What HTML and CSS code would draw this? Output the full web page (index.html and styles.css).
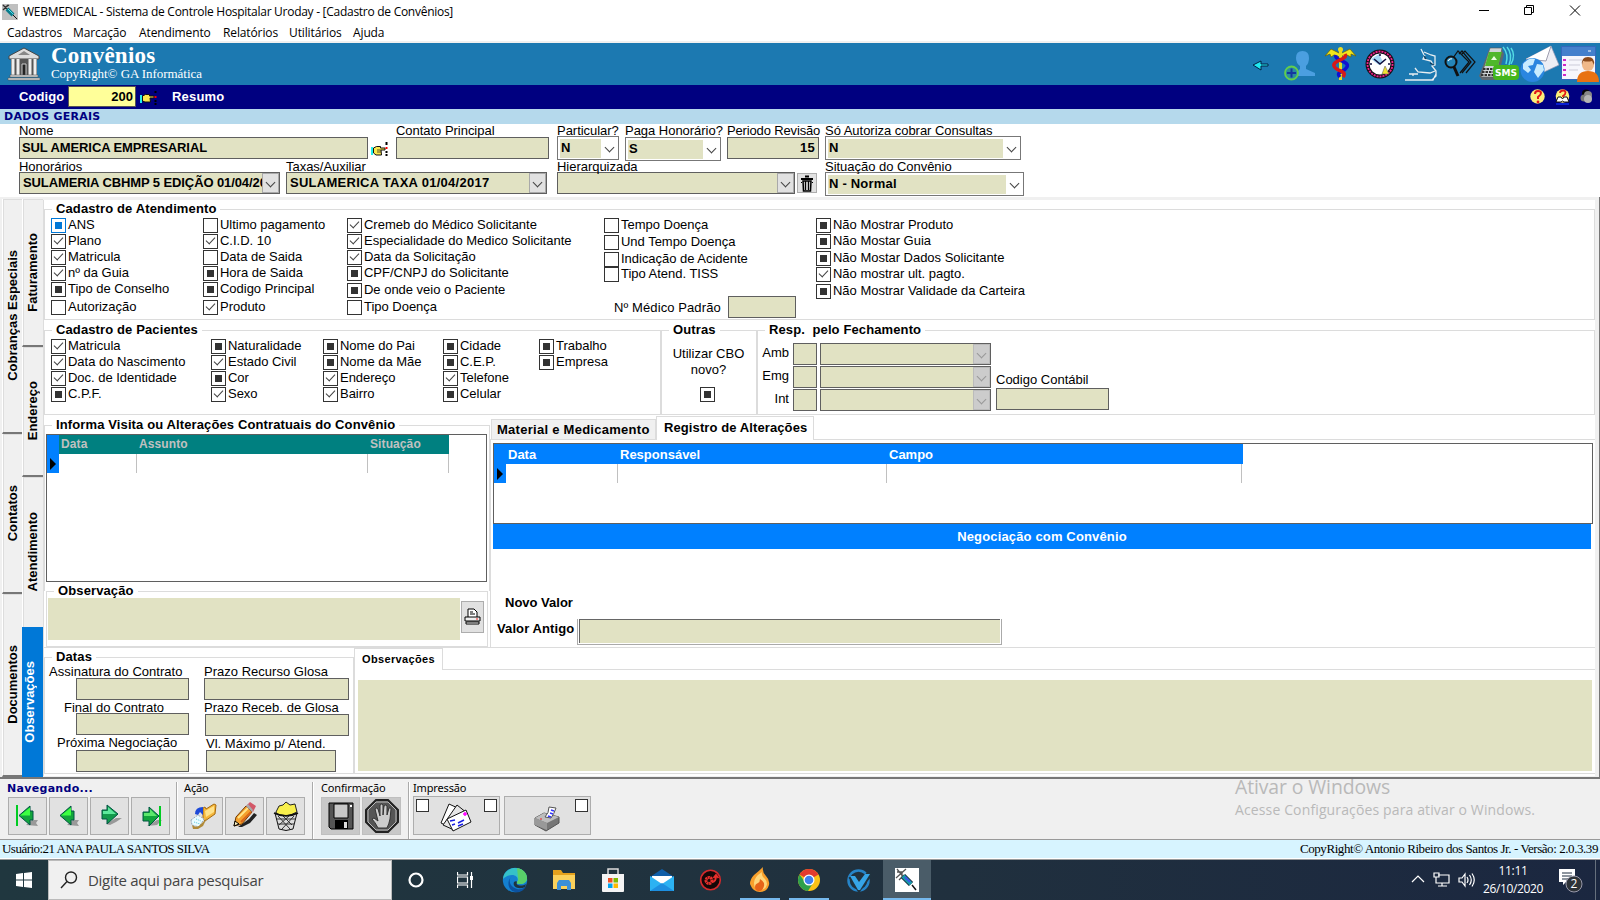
FILE: index.html
```html
<!DOCTYPE html>
<html lang="pt-BR">
<head>
<meta charset="utf-8">
<title>WEBMEDICAL - Cadastro de Convênios</title>
<link rel="stylesheet" href="styles.css">
</head>
<body>
<div class="titlebar">
  <svg class="app-icon" width="16" height="16" viewBox="0 0 16 16"><rect width="16" height="16" fill="#c0c0c0"/><path d="M1 1l5 5M1 6l5-5M4 3l3-2" stroke="#333" stroke-width="1.3"/><path d="M5 5l6 6" stroke="#0a7c8c" stroke-width="4"/><path d="M6 5l5 5" stroke="#4fe0ee" stroke-width="1"/><path d="M11 11l4 4" stroke="#111"/></svg>
  <span class="title-text">WEBMEDICAL - Sistema de Controle Hospitalar Uroday - [Cadastro de Convênios]</span>
  <svg class="winctl" width="116" height="22" viewBox="0 0 116 22" fill="none" stroke="#000"><path d="M7 10.500h10M52.500 7.500h7v7h-7zM54.500 7.500v-2h7v7h-2M98 5.500l10 10M108 5.500l-10 10"/></svg>
</div>
<div class="menubar"><span class="m1">Cadastros</span><span class="m2">Marcação</span><span class="m3">Atendimento</span><span class="m4">Relatórios</span><span class="m5">Utilitários</span><span>Ajuda</span></div>

<header class="banner">
  <svg class="temple" width="34" height="34" viewBox="0 0 34 34"><path d="M17 1L32 9v3H2V9z" fill="#ddd" stroke="#444"/><path d="M11 8l6-4 6 4z" fill="#888"/><rect x="4" y="12" width="26" height="16" fill="#555"/><path d="M6 12v16M11 12v16M23 12v16M28 12v16" stroke="#eee" stroke-width="3"/><path d="M15 28V17h4v11" fill="#222" stroke="#ccc"/><path d="M3 28h28v2H3zM1 31h32v2H1z" fill="#ddd" stroke="#555" stroke-width=".6"/></svg>
  <div class="brand"><div class="brand-name">Convênios</div><div class="brand-copy">CopyRight© GA Informática</div></div>
  <div class="banner-icons">
    <svg class="i1" width="17" height="12" viewBox="0 0 17 12"><path d="M1 6l8-4v3h7v2H9v4z" fill="#20e8f0" stroke="#024"/></svg>
    <svg class="i2" width="32" height="32" viewBox="0 0 32 32"><path d="M12 8q0-7 6.500-7T25 8q0 5-3 8v3l9 4v3H11l2-4 3-3v-3q-4-3-4-8z" fill="#4b9fe0"/><circle cx="7.500" cy="23" r="6.500" fill="#2b8ca0" stroke="#62ce4c" stroke-width="1.800"/><path d="M7.500 18.500v9M3 23h9" stroke="#1436a0" stroke-width="2"/></svg>
    <svg class="i3" width="33" height="34" viewBox="0 0 33 34"><path d="M1 9l6-7 8 4h3l8-4 6 7-5-2v3l-4-2-1 3-5-3-5 3-2-3-3 2-1-3z" fill="#f2e61c" stroke="#6b6000" stroke-width=".7"/><path d="M16.500 1v32" stroke="#e8dc20" stroke-width="3"/><path d="M12 8c-2 6 14 6 11 12s-12 4-7 10" fill="none" stroke="#1010d0" stroke-width="3.500"/><path d="M21 7c3 6-13 6-11 12s14 4 9 11" fill="none" stroke="#d81818" stroke-width="3.500"/><circle cx="16.500" cy="2.500" r="2.500" fill="#e8dc20"/></svg>
    <svg class="i4" width="30" height="30" viewBox="0 0 30 30"><circle cx="15" cy="15" r="12.500" fill="#fff" stroke="#181018" stroke-width="4"/><circle cx="15" cy="15" r="12.500" fill="none" stroke="#f0208a" stroke-width="1.800" stroke-dasharray="2 1"/><path d="M6 10l8-5 4 8-4 3z" fill="#a4d6f4"/><path d="M15 5v2M5 15h2M25 15h-2M9 10l6 5 6-5" fill="none" stroke="#101040" stroke-width="1.600"/><path d="M20 17l4 8h-7z" fill="#f2e230" stroke="#555" stroke-width=".5"/></svg>
    <svg class="i5" width="34" height="34" viewBox="0 0 34 34" fill="none" stroke="#e8eef2" stroke-width="1.300"><path d="M17 1l3 6M20 4l7 3 4 1v9l-3 1 4 5v5l-4 4M21 7l-2 4 8 2 3 5M11 20l3 4 12 1 5-2M5 26h9M9 26v2M1 32h28l3-6"/><path d="M20 8l2 3M26 15l4 2" stroke="#103a58"/></svg>
    <svg class="i6" width="33" height="29" viewBox="0 0 33 29" fill="none" stroke="#111" stroke-width="1.200"><path d="M9 8l5-7 11 11-9 11M15 4l3-3 9 11-9 11M18 4l3-3 10 11-9 11"/><circle cx="7" cy="12" r="5.500" stroke-width="2" fill="#2586b9"/><path d="M10 17l4 9" stroke-width="3"/><path d="M4 11q2-3 4-2" stroke="#fff"/></svg>
    <svg class="i7" width="41" height="37" viewBox="0 0 41 37"><path d="M10 5l13 0 2 4-7 26-15 0-3-4z" fill="#606970"/><path d="M11 3h12l-6 29H2z" fill="#cfd4d6" stroke="#555" stroke-width=".6"/><path d="M10 7h13l-4 14H6z" fill="#4fb72c"/><path d="M12 15l3-4 3 4z" fill="#e9ffe0"/><path d="M4 24h12M3 27h12M2 30h12" stroke="#333" stroke-width="2" stroke-dasharray="2.500 1"/><path d="M24 2q6 7 3 17M28 2q6 7 2 18M32 3q5 7 0 16" fill="none" stroke="#54dce4" stroke-width="1.500"/><rect x="14" y="20" width="26" height="15" rx="4" fill="#45b61d"/><text x="27" y="31" text-anchor="middle" class="sms">SMS</text></svg>
    <svg class="i8" width="40" height="38" viewBox="0 0 40 38"><path d="M6 14L31 1l8 19-15 7z" fill="#eeeef4" stroke="#9a9ab4" stroke-width=".7"/><path d="M6 14l20 2L31 1" fill="#fff" stroke="#9c9cae"/><circle cx="12.500" cy="25" r="12" fill="#2a86e0"/><path d="M3 19q6-7 12-5l-2 6-5 1 3 4-3 3-5-4zM17 19l6 1 1 5-6 8-4-6z" fill="#c8ecff"/></svg>
    <svg class="i9" width="39" height="38" viewBox="0 0 39 38"><rect x=".5" y=".5" width="34" height="33" fill="#f6f6fc" stroke="#3468bc"/><path d="M1 1h33v9H1z" fill="#4480cc"/><path d="M27 5h3" stroke="#fff"/><path d="M2 14h3M2 19h3M2 24h3M2 29h3" stroke="#ce29c8" stroke-width="2"/><path d="M8 14h13M8 19h11M8 24h9" stroke="#cbcbd8"/><path d="M16 36q0-11 11-11t11 11z" fill="#e87212"/><circle cx="27" cy="19" r="6" fill="#f0b889"/><path d="M21 19q-1-8 6-8t6 8l-2-4q-4 1-9 0z" fill="#8b4a1c"/></svg>
  </div>
</header>

<div class="codebar">
  <span class="code-label">Codigo</span><span class="code-value">200</span>
  <svg class="hand" width="17" height="14" viewBox="0 0 17 14"><path d="M1 4v8" stroke="#2ee" stroke-width="2"/><path d="M2.500 5l3-1.500h4V5H14v2h-4l.5 4H5L2.500 10z" fill="#fbe74d" stroke="#111"/><path d="M15.500 0v2M15.500 9v2M15.500 12v2" stroke="#000" stroke-width="2"/><path d="M15.500 5v2" stroke="#f00" stroke-width="2"/></svg>
  <span class="resumo">Resumo</span>
  <div class="code-icons">
    <svg width="15" height="16" viewBox="0 0 15 16"><circle cx="7.500" cy="7.500" r="7.200" fill="#fdf07a"/><path d="M5 5q0-3 3-3 3 0 3 2t-3 4v2" fill="none" stroke="#e01818" stroke-width="2"/><circle cx="8" cy="13" r="1.400" fill="#e01818"/></svg>
    <svg width="15" height="16" viewBox="0 0 15 16"><circle cx="7.500" cy="7" r="6.800" fill="#fdf07a"/><path d="M1 13l2-5h3l1.500 2L9 8h3l2 5H9l-1.500-1L6 13z" fill="#fff" stroke="#111"/><path d="M5 4q0-2.500 3-2.500 2.500 0 2.500 2T8 7v1" fill="none" stroke="#e01818" stroke-width="1.800"/><path d="M1 15h13" stroke="#0b28f0" stroke-width="1.500"/></svg>
    <svg width="13" height="15" viewBox="0 0 13 15"><circle cx="6" cy="4.500" r="4" fill="#050505"/><circle cx="8" cy="6" r="4" fill="#888"/><circle cx="4" cy="9" r="3.500" fill="#777"/><circle cx="8" cy="10" r="4" fill="#b4b4b4"/></svg>
  </div>
</div>
<div class="section-title">DADOS GERAIS</div>

<section class="form">
  <div class="form-row">
    <div class="cell c-nome"><label>Nome</label><div class="field b">SUL AMERICA EMPRESARIAL</div></div>
    <svg class="hand2" width="17" height="15" viewBox="0 0 17 15"><path d="M1 5v8" stroke="#2ee" stroke-width="2"/><path d="M2.500 6l3-1.500h4V6H14v2h-4l.5 5H5L2.500 11z" fill="#fbe74d" stroke="#111"/><path d="M6 8h4M6 10h4" stroke="#111" stroke-width=".7"/><path d="M15.500 0v3M15.500 9v2M15.500 12v2" stroke="#000" stroke-width="2"/><path d="M15.500 5v2" stroke="#f00" stroke-width="2"/></svg>
    <div class="cell c-contato"><label>Contato Principal</label><div class="field"></div></div>
    <div class="cell c-part"><label>Particular?</label><div class="select"><span class="val">N</span><i class="chev"></i></div></div>
    <div class="cell c-paga"><label>Paga Honorário?</label><div class="select low"><span class="val">S</span><i class="chev"></i></div></div>
    <div class="cell c-per"><label>Periodo Revisão</label><div class="field b right">15</div></div>
    <div class="cell c-so"><label>Só Autoriza cobrar Consultas</label><div class="select"><span class="val">N</span><i class="chev"></i></div></div>
  </div>
  <div class="form-row second">
    <div class="cell c-hon"><label>Honorários</label><div class="field b combo"><span>SULAMERIA CBHMP 5 EDIÇÃO 01/04/20</span><i class="drop"></i></div></div>
    <div class="cell c-tax"><label>Taxas/Auxiliar</label><div class="field b combo"><span class="wide">SULAMERICA TAXA 01/04/2017</span><i class="drop"></i></div></div>
    <div class="cell c-hier"><label>Hierarquizada</label><div class="field combo"><span></span><i class="drop"></i></div></div>
    <div class="trash"><svg width="14" height="17" viewBox="0 0 14 17"><path d="M5 1.500h4M1 4h12" stroke="#000" stroke-width="2"/><path d="M3 6h8l-.5 10h-7z" fill="#bbb" stroke="#000" stroke-width="1.500"/><path d="M5.500 6v9M8.500 6v9" stroke="#000"/><path d="M1 7l1 1M13 7l-1 1" stroke="#000"/></svg></div>
    <div class="cell c-sit"><label>Situação do Convênio</label><div class="select"><span class="val wide">N - Normal</span><i class="chev"></i></div></div>
  </div>
</section>

<main class="workspace">
  <nav class="vtabs outer"><div class="vt v1"><span>Cobranças Especiais</span></div><div class="vt v2"><span>Contatos</span></div><div class="vt v3"><span>Documentos</span></div></nav>
  <nav class="vtabs inner"><div class="vt w1"><span>Faturamento</span></div><div class="vt w2"><span>Endereço</span></div><div class="vt w3"><span>Atendimento</span></div><div class="vt w4 active"><span>Observações</span></div></nav>
  <div class="page">
    <section class="group g-atend"><h3>Cadastro de Atendimento</h3>
      <div class="col k1"><div class="chk mid focus">ANS</div><div class="chk on">Plano</div><div class="chk on">Matricula</div><div class="chk on">nº da Guia</div><div class="chk mid">Tipo de Conselho</div><div class="chk d2">Autorização</div></div>
      <div class="col k2"><div class="chk">Ultimo pagamento</div><div class="chk on">C.I.D. 10</div><div class="chk">Data de Saida</div><div class="chk mid">Hora de Saida</div><div class="chk mid">Codigo Principal</div><div class="chk on d2">Produto</div></div>
      <div class="col k3"><div class="chk on">Cremeb do Médico Solicitante</div><div class="chk on">Especialidade do Medico Solicitante</div><div class="chk on">Data da Solicitação</div><div class="chk mid">CPF/CNPJ do Solicitante</div><div class="chk mid d1">De onde veio o Paciente</div><div class="chk d2">Tipo Doença</div></div>
      <div class="col k4"><div class="chk">Tempo Doença</div><div class="chk d1">Und Tempo Doença</div><div class="chk d1">Indicação de Acidente</div><div class="chk">Tipo Atend. TISS</div><div class="medico"><span>Nº Médico Padrão</span><div class="field"></div></div></div>
      <div class="col k5"><div class="chk mid">Não Mostrar Produto</div><div class="chk mid">Não Mostar Guia</div><div class="chk mid d1">Não Mostar Dados Solicitante</div><div class="chk on">Não mostrar ult. pagto.</div><div class="chk mid d1">Não Mostrar Validade da Carteira</div></div>
    </section>
    <div class="row2">
      <section class="group g-pac"><h3>Cadastro de Pacientes</h3>
        <div class="col p1"><div class="chk on">Matricula</div><div class="chk on">Data do Nascimento</div><div class="chk on">Doc. de Identidade</div><div class="chk mid">C.P.F.</div></div>
        <div class="col p2"><div class="chk mid">Naturalidade</div><div class="chk on">Estado Civil</div><div class="chk mid">Cor</div><div class="chk on">Sexo</div></div>
        <div class="col p3"><div class="chk mid">Nome do Pai</div><div class="chk mid">Nome da Mãe</div><div class="chk on">Endereço</div><div class="chk on">Bairro</div></div>
        <div class="col p4"><div class="chk mid">Cidade</div><div class="chk mid">C.E.P.</div><div class="chk on">Telefone</div><div class="chk mid">Celular</div></div>
        <div class="col p5"><div class="chk mid">Trabalho</div><div class="chk mid">Empresa</div></div>
      </section>
      <section class="group g-out"><h3>Outras</h3><div class="cbo">Utilizar CBO<br>novo?</div><div class="chk mid"></div></section>
      <section class="group g-resp"><h3>Resp.&nbsp; pelo Fechamento</h3>
        <div class="resp-rows">
          <div class="resp"><span>Amb</span><div class="field s"></div><div class="field combo off"><span></span><i class="drop"></i></div></div>
          <div class="resp"><span>Emg</span><div class="field s"></div><div class="field combo off"><span></span><i class="drop"></i></div></div>
          <div class="resp"><span>Int</span><div class="field s"></div><div class="field combo off"><span></span><i class="drop"></i></div></div>
        </div>
        <div class="contabil"><span>Codigo Contábil</span><div class="field"></div></div>
      </section>
    </div>
    <div class="row3">
      <div class="left">
        <section class="group g-inf"><h3>Informa Visita ou Alterações Contratuais do Convênio</h3>
          <div class="grid g1"><div class="gh"><b class="ind"></b><span>Data</span><span>Assunto</span><span>Situação</span></div><div class="gr"><b class="ind arrow"></b><span></span><span></span><span></span></div></div>
        </section>
        <section class="group g-obs"><h3>Observação</h3><div class="memo"></div>
          <div class="pbtn"><svg width="17" height="18" viewBox="0 0 17 18"><path d="M4 9V1h6l3 3v5" fill="#fff" stroke="#000"/><path d="M6 4h3M6 6h5" stroke="#000"/><path d="M1 9h15v4H1z" fill="#eee" stroke="#000"/><path d="M2 14h13v2H2z" fill="#fff" stroke="#000"/><path d="M12 11h2" stroke="#e22"/></svg></div>
        </section>
      </div>
      <div class="right-pane">
        <div class="tabs"><div class="tab">Material e Medicamento</div><div class="tab sel">Registro de Alterações</div></div>
        <div class="pane">
          <div class="grid g2"><div class="gh"><b class="ind"></b><span>Data</span><span>Responsável</span><span>Campo</span></div><div class="gr"><b class="ind arrow"></b><span></span><span></span><span></span></div></div>
          <div class="nego">Negociação com Convênio</div>
          <div class="novo">Novo Valor</div>
          <div class="antigo"><span>Valor Antigo</span><div class="sunk"><div></div></div></div>
        </div>
      </div>
    </div>
    <div class="row4">
      <section class="group g-dat"><h3>Datas</h3>
        <div class="dcol a"><label>Assinatura do Contrato</label><div class="field"></div><label class="l2">Final do Contrato</label><div class="field"></div><label class="l3">Próxima Negociação</label><div class="field"></div></div>
        <div class="dcol b2"><label>Prazo Recurso Glosa</label><div class="field"></div><label>Prazo Receb. de Glosa</label><div class="field f2"></div><label class="l3">Vl. Máximo p/ Atend.</label><div class="field f3"></div></div>
      </section>
      <div class="obs-pane"><div class="tabs"><div class="tab sel small">Observações</div></div><div class="pane"><div class="memo"></div></div></div>
    </div>
  </div>
</main>

<footer class="toolbar">
  <div class="tg t1"><h4 class="nav">Navegando...</h4><div class="btns">
    <div class="btn"><svg width="32" height="32" viewBox="0 0 32 32"><path d="M14 25l6-5h6l-2 3 2 3z" fill="#999"/><path d="M5 5v21" stroke="#0c2" stroke-width="2"/><path d="M7 15.500L18 6v5h3v9h-3v5z" fill="#12a53c" stroke="#054"/><path d="M8 15.500l10-8v8z" fill="#3dff42"/></svg></div>
    <div class="btn"><svg width="32" height="32" viewBox="0 0 32 32"><path d="M14 25l6-5h6l-2 3 2 3z" fill="#999"/><path d="M7 15.500L18 6v5h3v9h-3v5z" fill="#12a53c" stroke="#054"/><path d="M8 15.500l10-8v8z" fill="#3dff42"/></svg></div>
    <div class="btn"><svg width="32" height="32" viewBox="0 0 32 32"><path d="M12 24l10-6h6l-6 4-6 3z" fill="#999"/><path d="M24 14L13 5v5H8v9h5v5z" fill="#129a4c" stroke="#054"/><path d="M9 11h5V7l8 7H9z" fill="#5ce89c"/></svg></div>
    <div class="btn"><svg width="32" height="32" viewBox="0 0 32 32"><path d="M12 26l10-6h5l-5 5z" fill="#999"/><path d="M24 16L14 7v5H8v9h6v5z" fill="#12a53c" stroke="#054"/><path d="M9 13h6V9l7 7H9z" fill="#5ce86c"/><path d="M25 6v20" stroke="#0c2" stroke-width="2"/></svg></div>
  </div></div>
  <div class="tg t2"><h4>Ação</h4><div class="btns">
    <div class="btn"><svg width="32" height="32" viewBox="0 0 32 32"><path d="M15 8l2-1 1 2 8-5 2 1-1 9-10 7-2-2z" fill="#f5b73c" stroke="#a66a10"/><path d="M17 11l9-5v6l-8 5z" fill="#ffe28a"/><path d="M7 14q0-7 8-7v8l-3-3-2 3z" fill="#1c49d8"/><path d="M3 20l7-5 6 4-5 8-7-2z" fill="#e9fbff" stroke="#9ab" stroke-dasharray="2 1"/><path d="M6 22l6 2M8 19l5 2" stroke="#5bc8dc" stroke-dasharray="1 1"/><path d="M4 25q5 4 9-1l6-6-4 8-5 3H5z" fill="#b08a38"/></svg></div>
    <div class="btn"><svg width="32" height="32" viewBox="0 0 32 32"><path d="M9 27l11-8 5-6 3 2-7 8-8 4z" fill="#222"/><path d="M5 26l2-9L17 6l6 6-10 12z" fill="#f4a02c" stroke="#703a00"/><path d="M9 18L19 8" stroke="#ffe68a" stroke-width="2"/><path d="M12 22L22 12" stroke="#d86518" stroke-width="2"/><path d="M17 6l4-4 6 4-3 6z" fill="#d35868"/><path d="M17 6l2-2 5 6-1 2z" fill="#aaa"/><path d="M5 26l1-5 4 3z" fill="#fff3c0" stroke="#000"/></svg></div>
    <div class="btn"><svg width="32" height="32" viewBox="0 0 32 32"><path d="M6 12l3-6 4-1 3-3 4 3 5-1 2 8-9 4H8z" fill="#f8ef4c" stroke="#222"/><path d="M5 13l4 16q7 3 14 0l4-16q-11 5-22 0z" fill="#ddd" stroke="#111"/><path d="M8 16l12 13M13 16l9 9M24 16L12 29M19 16L9 25M7 19h18M8 24h16" stroke="#333" stroke-width="1"/><path d="M4 13q12 6 24 0" fill="none" stroke="#111" stroke-width="1.500"/></svg></div>
  </div></div>
  <div class="tg t3"><h4>Confirmação</h4><div class="btns">
    <div class="btn dark"><svg width="32" height="32" viewBox="0 0 32 32"><path d="M4 3h24v26H6l-2-2z" fill="#555" stroke="#000"/><path d="M9 4h14v14H9z" fill="#c8c8c8" stroke="#000"/><path d="M10 20h13v9H10z" fill="#000"/><path d="M19 22h3v6h-3z" fill="#ddd"/><path d="M26 5v2" stroke="#fff" stroke-width="2"/></svg></div>
    <div class="btn dark"><svg width="34" height="34" viewBox="0 0 34 34"><path d="M11 1h12l10 10v12L23 33H11L1 23V11z" fill="#555" stroke="#222" stroke-width="2"/><path d="M11 3h12l8 8v12l-8 8H11l-8-8V11z" fill="none" stroke="#bbb"/><path d="M13 29q-3-6-6-9l2-1 4 3-3-12q2-2 3 0l2 7V6q2-2 3 0v10l1-9q2-2 3 0v9l2-7q2-1 2 1l-1 10q-1 5-3 9z" fill="#ccc" stroke="#333"/></svg></div>
  </div></div>
  <div class="tg t4"><h4>Impressão</h4><div class="btns">
    <div class="btn wide-btn"><i class="box"></i><svg width="34" height="32" viewBox="0 0 34 32"><path d="M1 22L9 3l13 6-8 19z" fill="#fff" stroke="#111"/><path d="M3 24L17 4l10 8-13 17z" fill="#e6e6e6" stroke="#111"/><path d="M7 18l19-9 5 12-18 9z" fill="#fff" stroke="#111"/><path d="M10 20l5-1M18 22l6-3M12 24l3-1M18 25l5-2" stroke="#1a20e0" stroke-width="1.500"/><path d="M23 13h4M25 11v4" stroke="#f0f" stroke-width="1.500"/></svg><i class="box r"></i></div>
    <div class="btn wide-btn"><svg class="prn" width="30" height="28" viewBox="0 0 30 28"><path d="M2 13l9-5 15 4v6L13 26 2 20z" fill="#777" stroke="#555"/><path d="M2 13l9-5 15 4-12 6z" fill="#bdbdbd"/><path d="M2 13l12 5v7L2 20z" fill="#999"/><path d="M12 12q4-4 4-10l7 1q-2 6-5 10z" fill="#fff" stroke="#555"/><path d="M18 5l3 1M17 8l3 1M15 11l3 1" stroke="#33f" stroke-width="1.500"/><path d="M7 14h2" stroke="#e22"/></svg><i class="box r"></i></div>
  </div></div>
  <div class="activate"><div class="a1">Ativar o Windows</div><div class="a2">Acesse Configurações para ativar o Windows.</div></div>
</footer>
<div class="status"><span class="user">Usuário:21 ANA PAULA SANTOS SILVA</span><span class="ver">CopyRight© Antonio Ribeiro dos Santos Jr. - Versão: 2.0.3.39</span></div>
<div class="taskbar">
  <div class="start"><svg width="16" height="16" viewBox="0 0 16 16" fill="#fff"><path d="M0 2l7-1v6.500H0zM8 .9L16 0v7.500H8zM0 8.500h7V15l-7-1zM8 8.500h8V16l-8-1.100z"/></svg></div>
  <div class="search"><svg width="18" height="18" viewBox="0 0 18 18" fill="none" stroke="#222" stroke-width="1.400"><circle cx="11" cy="6.500" r="5.500"/><path d="M7 10.500L1 17"/></svg><span>Digite aqui para pesquisar</span></div>
  <div class="ti"><svg width="18" height="18" viewBox="0 0 18 18"><circle cx="8" cy="9" r="6.500" fill="none" stroke="#fff" stroke-width="2.200"/></svg></div>
  <div class="ti"><svg width="18" height="18" viewBox="0 0 18 18" fill="none" stroke="#fff" stroke-width="1.200"><path d="M.5 1v3h10V1M.5 6h10v6H.5zM.5 17v-3h10v3M14.500 1v4M14.500 9v8"/><path d="M14.500 5v4" stroke-width="3"/></svg></div>
  <div class="ti e"><svg width="26" height="26" viewBox="0 0 26 26"><circle cx="13" cy="13" r="12.200" fill="#1480d0"/><path d="M1 12C2 4 8 1 13 1c7 0 12 5 12 10 0 4-3 6-7 6-3 0-4-1-3-2 2-3 0-7-5-7-4 0-7 2-9 4z" fill="#35c1c8"/><path d="M15 1c6 1 10 5 10 10 0 4-3 6-7 6-3 0-4-1-3-2 2-2 1-4 1-5z" fill="#59d069"/><path d="M10 9c-4 3-3 11 5 13 4 1 7-1 9-3-2 5-7 7-11 6C6 24 4 14 10 9z" fill="#0c52a0"/><path d="M15 15c-2 3 4 5 9 2l-1 3c-6 3-13 0-11-5 1-1 3-1 3 0z" fill="#20333f"/></svg></div>
  <div class="ti"><svg width="24" height="22" viewBox="0 0 24 22"><path d="M1 1h8l2 3h12v16H1z" fill="#e5a11c"/><path d="M1 6h22v14H1z" fill="#fbd15b"/><path d="M5 21v-7l2-3h10l2 3v7h-4v-4H9v4z" fill="#3c90d8"/></svg></div>
  <div class="ti"><svg width="24" height="26" viewBox="0 0 24 26"><path d="M7 8V2h10v6" fill="none" stroke="#ddd" stroke-width="1.500"/><path d="M1 7h22v17q0 1-1 1H2q-1 0-1-1z" fill="#f4f4f4"/><path d="M7 11h4.500v4.500H7z" fill="#f04e23"/><path d="M12.500 11H17v4.500h-4.500z" fill="#7fba00"/><path d="M7 16.500h4.500V21H7z" fill="#00a4ef"/><path d="M12.500 16.500H17V21h-4.500z" fill="#ffb900"/></svg></div>
  <div class="ti"><svg width="26" height="24" viewBox="0 0 26 24"><path d="M1 9l12-8 12 8v14H1z" fill="#0f5ea8"/><path d="M3 8h20v9H3z" fill="#fff"/><path d="M1 8l12 8 12-8v15H1z" fill="#2cb2f2"/><path d="M1 23L13 15l12 8z" fill="#1d8fe0"/></svg></div>
  <div class="ti"><svg width="24" height="24" viewBox="0 0 24 24"><circle cx="11.500" cy="12" r="9.800" fill="#150808" stroke="#d42a2c" stroke-width="1.600"/><circle cx="10" cy="12.500" r="3" fill="none" stroke="#e8302c" stroke-width="3" stroke-dasharray="2 .5"/><path d="M13 14q4 0 4-6M14.500 10L17 7l2.500 3" fill="none" stroke="#e8302c" stroke-width="1.800"/></svg></div>
  <div class="ti run"><svg width="22" height="26" viewBox="0 0 22 26"><path d="M14 0q-1 5 3 9 4 4 3 9-2 7-9 7T1 17q0-5 4-9 5-4 9-8z" fill="#f9a02c"/><path d="M13 5q-8 5-8 11 0 7 6 7t7-6q0-3-2-5-4-3-3-7z" fill="#ffd67b"/><path d="M11 12q5 3 4 7-1 5-5 5t-4-4q0-3 3-4 2-1 2-4z" fill="#e76419"/></svg></div>
  <div class="ti run"><svg width="24" height="24" viewBox="0 0 24 24"><circle cx="12" cy="12" r="11" fill="#fbc116"/><path d="M12 12L2.500 6.500A11 11 0 0 1 21.500 6.500z" fill="#e33b2e"/><path d="M2.500 6.500A11 11 0 0 0 11 23l5-8-8-1z" fill="#2da04c"/><circle cx="12" cy="12" r="5.500" fill="#fff"/><circle cx="12" cy="12" r="4.300" fill="#3f80ee"/></svg></div>
  <div class="ti"><svg width="25" height="25" viewBox="0 0 25 25"><circle cx="12.500" cy="12.500" r="10" fill="none" stroke="#2684c8" stroke-width="2.500"/><path d="M5 8l8 12L24 5" fill="none" stroke="#20333f" stroke-width="6"/><path d="M4 8l5 0 4 6 6-8h5L14 22h-2z" fill="#36a5e8"/></svg></div>
  <div class="ti cur"><svg width="24" height="24" viewBox="0 0 24 24"><rect width="24" height="24" fill="#fff"/><path d="M2 1l8 10M1 10l10-9M4 12l5-5M2 4h5v6" fill="none" stroke="#555" stroke-width="1.300"/><path d="M8 8l8 8" stroke="#123" stroke-width="6"/><path d="M8 8l8 8" stroke="#159aa8" stroke-width="4"/><path d="M10 9l5 5" stroke="#3a55e8" stroke-width="2"/><path d="M17 17l4 5" stroke="#111" stroke-width="1.500"/></svg></div>
  <div class="tray">
    <svg class="net" width="64" height="20" viewBox="0 0 64 20" fill="none" stroke="#fff" stroke-width="1.200"><path d="M1 12l6-6 6 6M27 5h11v8H25V9M31 13v3M27 16h9M23 3h5v4h-5zM25 7v2M48 8h3l3-4v12l-3-4h-3zM56 7q2 3 0 6M58.500 5q3.500 5 0 10M61 3.500q4.500 6.500 0 13"/></svg>
    <div class="clock"><div>11:11</div><div>26/10/2020</div></div>
    <svg class="notif" width="26" height="26" viewBox="0 0 26 26"><path d="M1 2h16v13H8l-3 3v-3H1z" fill="#fff"/><path d="M4 6h10M4 9h10M4 12h6" stroke="#1d2c3e"/><circle cx="16" cy="17" r="8" fill="#2e3338" stroke="#99a"/><text x="16" y="21" text-anchor="middle" class="badge">2</text></svg>
  </div>
</div>
</body>
</html>
```
FILE: styles.css
```css
* { box-sizing: border-box; }
body { margin: 0; width: 1600px; height: 900px; overflow: hidden; background: #fff; color: #000; font: 13px/16px "Liberation Sans", Arial, sans-serif; }
svg { display: block; flex: none; }
h3, h4 { margin: 0; }
.titlebar { display: flex; height: 22px; padding-left: 2px; align-items: center; font: 12px/20px "Open Sans", "Noto Sans", sans-serif; }
.app-icon { margin-top: 1px; }
.title-text { margin-left: 5px; padding-top: 2px; white-space: nowrap; letter-spacing: -.275px; }
.winctl { margin-left: auto; margin-right: 12px; }
.menubar { display: flex; height: 21px; padding-left: 7px; border-bottom: 2px solid #f0f0f0; font: 12px/21px "Open Sans", "Noto Sans", sans-serif; white-space: nowrap; letter-spacing: -.12px; }
.m1 { width: 66px; } .m2 { width: 66px; } .m3 { width: 84px; } .m4 { width: 66px; } .m5 { width: 64px; }

.banner { display: flex; height: 42px; background: #1c79b1; color: #fff; }
.temple { margin: 4px 0 0 7px; }
.brand { margin-left: 10px; font-family: "Liberation Serif", "Times New Roman", serif; white-space: nowrap; }
.brand-name { font-size: 23px; line-height: 25px; font-weight: bold; letter-spacing: .25px; }
.brand-copy { font-size: 13px; line-height: 12px; letter-spacing: -.05px; }
.banner-icons { display: flex; margin-left: auto; align-items: flex-start; }
.i1 { margin-top: 16px; margin-right: 15px; } .i2 { margin-top: 7px; margin-right: 8px; } .i3 { margin-top: 4px; margin-right: 8px; }
.i4 { margin-top: 6px; margin-right: 9px; } .i5 { margin-top: 5px; margin-right: 6px; } .i6 { margin-top: 7px; margin-right: 2px; }
.i7 { margin-top: 2px; } .i8 { margin-top: 2px; margin-right: 1px; } .i9 { margin-top: 3px; }
.sms { font: bold 9px "DejaVu Sans", sans-serif; fill: #fff; }

.codebar { display: flex; height: 24px; background: #000080; color: #fff; font-weight: bold; font-size: 13px; line-height: 24px; align-items: flex-start; }
.code-label { width: 49px; margin-left: 19px; letter-spacing: .1px; }
.code-value { width: 68px; height: 21px; margin-top: 1px; padding-right: 2px; background: #ffff99; border: 1px solid #555; color: #000; text-align: right; line-height: 19px; font-size: 13px; }
.hand { margin: 6px 0 0 4px; }
.resumo { margin-left: 15px; letter-spacing: .2px; }
.code-icons { display: flex; gap: 10px; margin: 4px 7px 0 auto; }
.section-title { height: 15px; padding-left: 4px; background: #b5d9ec; color: #000080; font: bold 11px/16px "DejaVu Sans", Verdana, sans-serif; letter-spacing: .25px; }

.form { height: 73px; }
.form-row { display: flex; height: 36px; align-items: flex-start; }
.form-row.second { height: 37px; }
.cell { white-space: nowrap; }
.cell label { display: block; height: 13px; line-height: 14px; font-size: 13px; letter-spacing: -.03px; }
.c-per label { letter-spacing: -.15px; }
.second .cell label { height: 12px; }
.field { height: 22px; background: #e1e2c3; border: 1px solid #5f5f5f; }
.field.b, .val { font-weight: bold; line-height: 19px; padding-left: 2px; overflow: hidden; white-space: nowrap; letter-spacing: -.1px; }
.field.right { text-align: right; padding-right: 3px; letter-spacing: .3px; }
.combo { display: flex; }
.field.b.combo { padding-left: 3px; }
.combo > span { flex: 1; overflow: hidden; min-width: 0; }
.combo > .wide { letter-spacing: .27px; }
.val.wide { letter-spacing: .2px; }
.drop { flex: none; width: 17px; background: #e1e1e1; border: 1px solid #a9a9a9; display: flex; justify-content: center; }
.drop::before, .chev::before { content: ""; width: 6px; height: 6px; border: solid #444; border-width: 0 1px 1px 0; transform: rotate(45deg); margin-top: 5px; }
.off .drop { background: #ccc; border-color: #bbb; }
.off .drop::before { border-color: #999; }
.select { display: flex; height: 24px; margin-top: -1px; padding: 2px 0 2px 2px; border: 1px solid #777; background: #fff; }
.select.low { margin-top: 0; }
.second .select { margin-top: 0; }
.val { flex: 1; height: 19px; background: #e1e2c3; padding-left: 1px; line-height: 17px; }
.chev { width: 17px; flex: none; display: flex; justify-content: center; }
.c-nome { width: 349px; margin-left: 19px; } .hand2 { margin: 18px 8px 0 3px; }
.c-contato { width: 153px; } .c-part { width: 62px; margin-left: 8px; } .c-paga { width: 96px; margin-left: 6px; }
.c-per { width: 92px; margin-left: 6px; } .c-so { width: 196px; margin-left: 6px; }
.c-hon { width: 261px; margin-left: 19px; } .c-tax { width: 261px; margin-left: 6px; } .c-hier { width: 238px; margin-left: 10px; }
.trash { width: 20px; height: 20px; margin: 13px 8px 0 2px; background: #e1e1e1; border: 1px solid #adadad; display: flex; justify-content: center; align-items: center; }
.c-sit { width: 199px; }

.workspace { display: flex; height: 582px; padding-top: 2px; background: #f0f0f0; border-right: 1px solid #777; border-bottom: 2px solid #777; }
.vtabs { display: flex; flex-direction: column; }
.outer { width: 20px; margin-left: 2px; } .inner { width: 21px; }
.vt { display: flex; align-items: center; justify-content: center; border-left: 1px solid #fff; border-bottom: 2px solid #777; box-shadow: inset 1px 1px 0 #ddd; }
.vt span { writing-mode: vertical-rl; transform: rotate(180deg); font-weight: bold; white-space: nowrap; font-size: 13px; }
.v1 { height: 235px; } .v2 { height: 160px; } .v3 { height: 183px; }
.w1 { height: 148px; } .w2 { height: 130px; } .w3 { height: 150px; border-bottom: 0; } .w4 { height: 150px; }
.vt.active { background: #0078d7; color: #fff; border: 0; box-shadow: none; padding-right: 5px; }
.page { width: 1552px; height: 576px; background: #fff; border-left: 1px solid #ddd; padding-top: 9px; margin-top: 1px; margin-right: auto; }
.group { position: relative; border: 1px solid #dcdcdc; display: flex; align-items: flex-start; }
.group > h3 { position: absolute; top: -8px; left: 7px; padding: 0 4px; background: #fff; font-size: 13px; line-height: 14px; white-space: nowrap; letter-spacing: .12px; }
.g-atend { height: 111px; padding: 7px 0 0 6px; }
.chk { display: flex; align-items: center; height: 16px; white-space: nowrap; letter-spacing: -.02px; }
.chk::before { content: ""; flex: none; width: 13px; height: 13px; margin-right: 2px; border: 1px solid #333; background: #fff; }
.chk.mid::before { background: linear-gradient(#333, #333) center / 7px 7px no-repeat #fff; }
.chk.focus::before { border-color: #0078d7; background-image: linear-gradient(#0078d7, #0078d7); }
.chk.on { position: relative; }
.chk.on::after { content: ""; position: absolute; left: 3px; top: 4px; width: 8px; height: 4px; border: solid #444; border-width: 0 0 1.3px 1.3px; transform: rotate(-47deg); }
.d1 { margin-top: 1px; } .d2 { margin-top: 2px; }
.k1 { width: 152px; } .k2 { width: 144px; } .k3 { width: 257px; } .k4 { width: 212px; }
.k3 .d2 { margin-top: 1px; }
.k4 .chk:nth-child(4) { margin-top: -1px; }
.medico { display: flex; margin: 14px 0 0 10px; justify-content: space-between; width: 182px; white-space: nowrap; letter-spacing: .1px; }
.medico span { line-height: 24px; } .medico .field { width: 68px; }
.row2 { display: flex; height: 96px; padding-top: 10px; }
.row2 .group { height: 85px; }
.g-pac { width: 617px; padding: 7px 0 0 6px; }
.p1 { width: 160px; } .p2 { width: 112px; } .p3 { width: 120px; } .p4 { width: 96px; }
.g-out { width: 96px; flex-direction: column; align-items: center; padding: 15px 1px 0 0; }
.cbo { text-align: center; } .g-out .chk { margin: 8px 2px 0 0; } .g-out .chk::before { margin: 0; }
.g-resp { flex: 1; padding: 12px 0 0 0; }
.resp { display: flex; height: 23px; } .resp > span { width: 31px; margin-right: 4px; text-align: right; line-height: 19px; }
.field.s { width: 24px; margin-right: 3px; } .resp .combo { width: 171px; }
.contabil { margin: 28px 0 0 5px; } .contabil span { display: block; line-height: 17px; white-space: nowrap; } .contabil .field { width: 113px; }
.row3 { display: flex; height: 232px; border-bottom: 1px solid #dcdcdc; }
.left { width: 446px; padding-top: 9px; }
.g-inf { height: 166px; border-bottom: 0; padding: 8px 1px 0 1px; }
.grid { background: #fff; border: 1px solid #5f5f5f; }
.g1 { width: 441px; height: 148px; }
.gh, .gr { display: flex; height: 19px; font-weight: bold; line-height: 18px; }
.ind { width: 12px; background: #0080ff; flex: none; }
.arrow { display: flex; align-items: center; padding-left: 3px; }
.arrow::before { content: ""; border-left: 6px solid #000; border-top: 6px solid transparent; border-bottom: 6px solid transparent; }
.gr span { border-right: 1px solid #c0c0c0; }
.g1 .gh span { background: #008080; color: #c0c0c0; padding-left: 2px; font-size: 12px; letter-spacing: .1px; }
.g1 span:nth-child(2) { width: 78px; } .g1 span:nth-child(3) { width: 231px; } .g1 span:nth-child(4) { width: 81px; }
.g-obs { width: 442px; height: 56px; margin: 0 0 0 2px; padding: 6px 0 0 1px; }
.g-obs .memo { width: 412px; height: 42px; background: #e1e2c3; }
.pbtn { width: 23px; height: 32px; margin: 3px 0 0 1px; background: #e1e1e1; border: 1px solid #adadad; display: flex; justify-content: center; align-items: center; }
.right-pane { flex: 1; }
.tabs { display: flex; align-items: flex-end; border-bottom: 1px solid #dcdcdc; }
.tab { height: 20px; border: 1px solid #dcdcdc; border-bottom: 0; background: #f0f0f0; font-weight: bold; padding: 0 5px; line-height: 19px; white-space: nowrap; }
.tab.sel { height: 24px; background: #fff; padding: 0 7px; line-height: 21px; margin-bottom: -1px; }
.right-pane .tabs { height: 24px; padding-left: 1px; }
.right-pane .tab:first-child { width: 165px; letter-spacing: .27px; } .right-pane .sel { width: 158px; letter-spacing: .1px; }
.right-pane .pane { border-left: 1px solid #dcdcdc; padding: 3px 0 0 2px; height: 207px; }
.g2 { width: 1100px; height: 81px; }
.g2 .gh { width: 749px; height: 20px; background: #0080ff; color: #fff; line-height: 21px; }
.g2 .gh span { padding-left: 2px; }
.g2 span:nth-child(2) { width: 112px; } .g2 span:nth-child(3) { width: 269px; } .g2 span:nth-child(4) { width: 355px; }
.nego { width: 1098px; height: 25px; background: #0080ff; color: #fff; font-weight: bold; text-align: center; line-height: 25px; letter-spacing: .15px; border-right: 0; }
.novo { font-weight: bold; margin: 46px 0 0 12px; }
.antigo { display: flex; font-weight: bold; padding-left: 4px; margin-top: 8px; white-space: nowrap; letter-spacing: .1px; }
.antigo span { width: 80px; line-height: 20px; }
.sunk { width: 425px; height: 26px; border: 1px solid #aaa; border-top: 0; padding: 0 1px 1px; }
.sunk div { height: 24px; background: #e1e2c3; border: solid #666; border-width: 1px 0 0 1px; }
.row4 { display: flex; height: 126px; }
.g-dat { width: 310px; height: 117px; margin-top: 9px; padding-top: 6px; }
.dcol label { display: block; height: 14px; line-height: 15px; white-space: nowrap; letter-spacing: .02px; }
.dcol.a { width: 159px; padding-left: 4px; } .a .field { width: 113px; margin-left: 27px; } .a .l2 { margin-left: 15px; height: 13px; } .a .l3 { margin-left: 8px; height: 15px; }
.b2 .field { width: 145px; } .b2 .f2 { width: 144px; margin-left: 1px; } .b2 .f3 { width: 130px; margin-left: 2px; } .b2 .l3 { padding-left: 2px; }
.obs-pane { flex: 1; border-bottom: 1px solid #dcdcdc; }
.obs-pane .tabs { height: 22px; }
.tab.small { height: 22px; width: 89px; font-size: 11px; line-height: 20px; letter-spacing: .35px; }
.obs-pane .pane { height: 103px; padding: 10px 0 0 3px; border-left: 1px solid #dcdcdc; }
.obs-pane .memo { width: 1234px; height: 91px; background: #e1e2c3; }

.toolbar { display: flex; height: 60px; background: #f0f0f0; padding-top: 3px; }
.tg { height: 57px; border-right: 1px solid #aaa; box-shadow: 1px 0 0 #fff; }
.tg h4 { height: 15px; font-size: 11px; line-height: 11px; font-weight: normal; font-family: "Noto Sans", sans-serif; letter-spacing: -.15px; }
.tg h4.nav { font: bold 11px/13px "DejaVu Sans", sans-serif; color: #000080; margin-left: -1px; letter-spacing: .3px; }
.btns { display: flex; gap: 2px; }
.btn { width: 39px; height: 38px; background: #e1e1e1; border: 1px solid #adadad; display: flex; align-items: center; justify-content: center; }
.btn.dark { background: #c8c8c8; border-color: #bfbfbf; }
.t1 { width: 177px; padding-left: 8px; } .t2 { width: 136px; padding-left: 7px; } .t3 { width: 96px; padding-left: 8px; } .t4 { padding-left: 4px; border: 0; box-shadow: none; }
.t4 .btns { gap: 4px; }
.t4 .btn { margin-top: -1px; height: 39px; }
.wide-btn { width: 87px; padding: 2px; justify-content: space-between; align-items: flex-start; }
.wide-btn svg { margin-top: 2px; margin-left: 4px; margin-right: 4px; } .wide-btn .prn { margin: 6px 0 0 26px; }
.box { width: 13px; height: 13px; background: #fff; border: 1px solid #333; }
.activate { margin-left: auto; width: 365px; color: #b9b9b9; font-family: "Open Sans", "Noto Sans", sans-serif; white-space: nowrap; }
.a1 { font-size: 19.4px; line-height: 9px; letter-spacing: -.1px; } .a2 { margin-top: 12px; font-size: 14px; line-height: 14px; letter-spacing: .13px; }
.status { display: flex; justify-content: space-between; height: 21px; padding: 0 2px; background: #d7f4ff; border: solid #999; border-width: 1px 0; box-shadow: inset 0 -1px 0 #fff; font: 13px/18px "Liberation Serif", "Times New Roman", serif; white-space: nowrap; }
.user { letter-spacing: -.52px; } .ver { letter-spacing: -.43px; }
.taskbar { display: flex; height: 40px; background: linear-gradient(90deg, #20373f, #20303e 60%, #1b2740); }
.start { width: 48px; display: flex; align-items: center; justify-content: center; }
.search { width: 344px; background: #f0f0f0; border: 1px solid #bbb; display: flex; align-items: center; padding-left: 11px; color: #444; font: 15px/36px "Open Sans", "Noto Sans", sans-serif; }
.search span { margin-left: 10px; letter-spacing: -.3px; white-space: nowrap; }
.ti { width: 49.100px; display: flex; align-items: center; justify-content: center; }
.run { background: linear-gradient(#76b9ed, #76b9ed) center bottom / 40px 2px no-repeat; }
.ti.cur { width: 48px; background: #4a5c68; border-bottom: 2px solid #76b9ed; padding-top: 2px; }
.tray { margin-left: auto; display: flex; align-items: center; color: #fff; margin-right: 4px; border-right: 1px solid #66707d; }
.clock { width: 74px; margin-left: 1px; text-align: center; font: 12px/18px "Open Sans", "Noto Sans", sans-serif; letter-spacing: -.35px; }
.notif { margin: 0 11px 0 8px; }
.badge { font: 12px "Open Sans", sans-serif; fill: #fff; }
```
